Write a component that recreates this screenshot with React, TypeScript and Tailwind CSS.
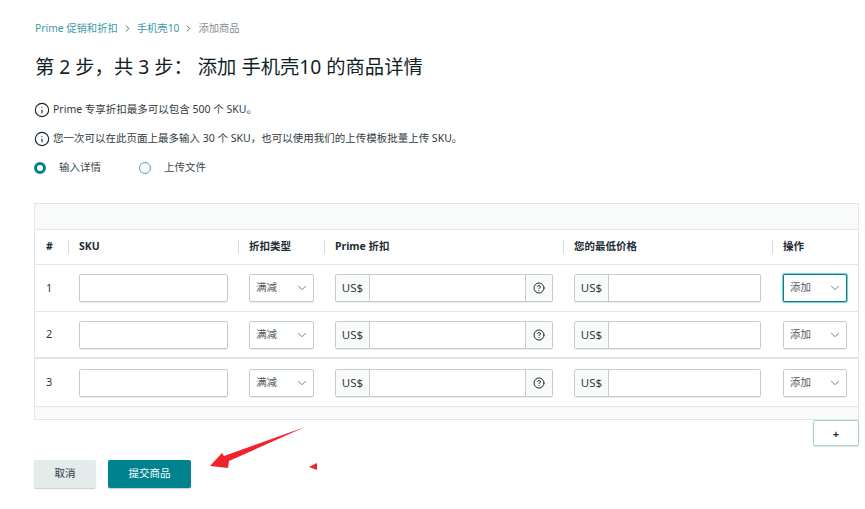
import { ChevronDown, ChevronRight, CircleHelp, Info } from "lucide-react"

const gridCols = "grid grid-cols-[33px_170px_86px_239px_209px_1fr]"

/* ── Row data ────────────────────────────────────────────────────── */
const rows = [
  { n: 1, h: "h-[47px]", focused: true },
  { n: 2, h: "h-[47px]", focused: false },
  { n: 3, h: "h-[48px]", focused: false },
]

const inputBox = "h-[28px] border border-[#c4cccc] rounded-[2px] bg-white shadow-[0_1px_1px_rgba(0,0,0,0.08)]"

function HeaderCell({ label, sep = true }: { label: string; sep?: boolean }) {
  return (
    <div className={`flex items-center h-[14px] pl-[10px] text-[10.5px] font-bold text-[#1d2b33] ${sep ? "border-l border-[#d5dbdb]" : ""}`}>
      {label}
    </div>
  )
}

function Select({ value, focused = false }: { value: string; focused?: boolean }) {
  return (
    <div
      className={`flex items-center justify-between h-[28px] pl-[6px] pr-[4px] rounded-[2px] bg-white text-[10.5px] text-[#4f5a60] ${
        focused ? "border border-[#00838f] shadow-[0_0_1px_1px_rgba(0,131,143,0.5)]" : "border border-[#c4cccc] shadow-[0_1px_1px_rgba(0,0,0,0.08)]"
      }`}
    >
      {value}
      <ChevronDown className="size-[14px] text-[#5f6b6c]" strokeWidth={1.5} />
    </div>
  )
}

function MoneyInput({ help = false }: { help?: boolean }) {
  return (
    <div className={`flex ${inputBox} overflow-hidden`}>
      <div className="flex items-center justify-center w-[34px] shrink-0 bg-[#f9fafa] border-r border-[#c4cccc] text-[11.5px] text-[#2f3a40]">
        US$
      </div>
      <div className="flex-1" />
      {help && (
        <div className="flex items-center justify-center w-[27px] shrink-0 bg-[#f9fafa] border-l border-[#c4cccc]">
          <CircleHelp className="size-[12px] text-[#1d2b33]" strokeWidth={2} />
        </div>
      )}
    </div>
  )
}

export default function App() {
  return (
    <div className="relative w-[865px] h-[509px] bg-white overflow-hidden font-['Noto_Sans','Noto_Sans_CJK_SC',sans-serif]">
      <div className="pl-[34px] pr-[6px] pt-[21px]">
        {/* Breadcrumb */}
        <nav className="flex items-center h-[15px] pl-px text-[10.3px]">
          <span className="text-[#3b9aa6]">Prime 促销和折扣</span>
          <ChevronRight className="size-[11px] mx-[4px] text-[#55626a]" strokeWidth={2} />
          <span className="text-[#3b9aa6]">手机壳10</span>
          <ChevronRight className="size-[11px] ml-[4px] mr-[4px] text-[#55626a]" strokeWidth={2} />
          <span className="text-[#868e92]">添加商品</span>
        </nav>

        {/* Title */}
        <h1 className="mt-[16px] h-[30px] pl-px leading-[30px] text-[19.3px] font-normal text-[#111f27] whitespace-nowrap">
          第 2 步，共 3 步： 添加 手机壳10 的商品详情
        </h1>

        {/* Notes */}
        <div className="mt-[20px] flex items-center gap-[3px] h-[16px] text-[10.5px] text-[#2f3a40]">
          <Info className="size-[16px] text-[#16232b]" strokeWidth={1.7} />
          Prime 专享折扣最多可以包含 500 个 SKU。
        </div>
        <div className="mt-[13px] flex items-center gap-[3px] h-[16px] text-[10.5px] text-[#2f3a40]">
          <Info className="size-[16px] text-[#16232b]" strokeWidth={1.7} />
          您一次可以在此页面上最多输入 30 个 SKU，也可以使用我们的上传模板批量上传 SKU。
        </div>

        {/* Radios */}
        <div className="mt-[14px] flex items-center h-[14px] text-[10.5px] text-[#3a454b]">
          <span className="size-[12px] rounded-full border-[3.5px] border-[#00838f] bg-white" />
          <span className="ml-[13px]">输入详情</span>
          <span className="ml-[38px] size-[12px] rounded-full border border-[#4fa3ad] bg-white" />
          <span className="ml-[13px]">上传文件</span>
        </div>

        {/* Table */}
        <div className="mt-[28px] w-[825px] border border-[#e3e6e6]">
          <div className="h-[26px] bg-[#f9fafa] border-b border-[#e3e6e6]" />
          <div className={`${gridCols} items-center h-[35px] border-b border-[#e3e6e6]`}>
            <div className="pl-[11px] text-[10.5px] font-bold text-[#1d2b33]">#</div>
            <HeaderCell label="SKU" />
            <HeaderCell label="折扣类型" />
            <HeaderCell label="Prime 折扣" />
            <HeaderCell label="您的最低价格" />
            <HeaderCell label="操作" />
          </div>

          {rows.map((row) => (
            <div
              key={row.n}
              className={`${gridCols} items-center ${row.h} ${row.n === 2 ? "border-b-2 border-[#dfe3e3]" : "border-b border-[#e3e6e6]"}`}
            >
              <div className="pl-[11px] text-[11px] text-[#2f3a40]">{row.n}</div>
              <div className="pl-[11px] pr-[10px]">
                <div className={inputBox} />
              </div>
              <div className="pl-[11px] pr-[10px]">
                <Select value="满减" />
              </div>
              <div className="pl-[11px] pr-[10px]">
                <MoneyInput help />
              </div>
              <div className="pl-[11px] pr-[11px]">
                <MoneyInput />
              </div>
              <div className="pl-[11px] pr-[11px]">
                <Select value="添加" focused={row.focused} />
              </div>
            </div>
          ))}

          <div className="h-[12px] bg-[#f9fafa]" />
        </div>

        {/* Add row */}
        <div className="flex justify-end w-[825px]">
          <button className="w-[46px] h-[26px] bg-white border border-[#a9d3d3] rounded-[2px] shadow-[0_1px_1px_rgba(0,0,0,0.12)] text-[11px] font-bold leading-none text-[#1d2b33]">
            +
          </button>
        </div>

        {/* Actions */}
        <div className="mt-[14px] flex gap-[12px]">
          <button className="w-[62px] h-[28px] bg-[#e3ebeb] rounded-[2px] shadow-[0_1px_1px_rgba(0,0,0,0.2)] text-[10.5px] text-[#2f3a40]">
            取消
          </button>
          <button className="w-[83px] h-[28px] bg-[#00838f] rounded-[2px] shadow-[0_1px_1px_rgba(0,0,0,0.2)] text-[10.5px] text-white">
            提交商品
          </button>
        </div>
      </div>

      {/* Red annotation arrow */}
      <svg className="absolute left-0 top-0 pointer-events-none" width="865" height="509" viewBox="0 0 865 509">
        <polygon points="305,427 229,461 228,468 210,466 222,453 224,456" fill="#f2222c" />
        <polygon points="317,463 317,470 309,467" fill="#f2222c" />
      </svg>
    </div>
  )
}
